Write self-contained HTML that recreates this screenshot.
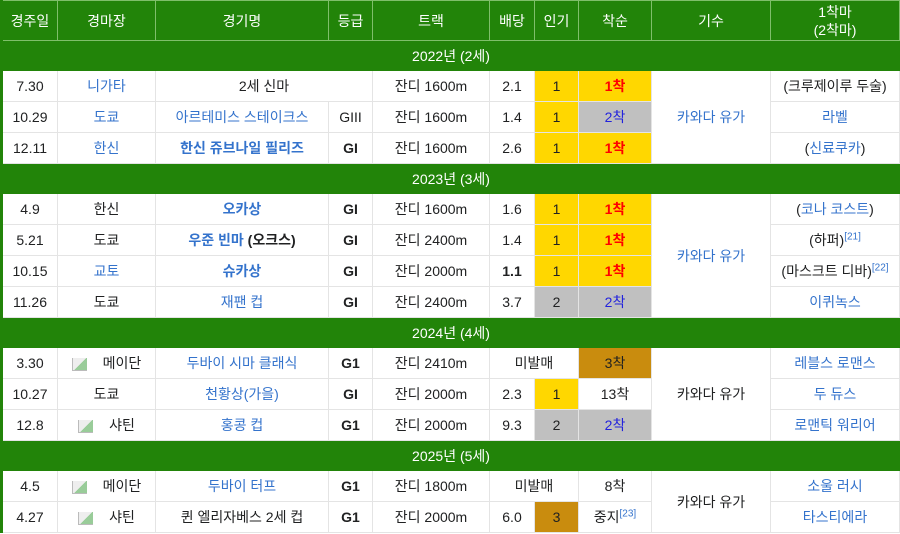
<!DOCTYPE html>
<html><head><meta charset="utf-8"><style>
body{margin:0;background:#fff;font-family:"Liberation Sans","Noto Sans CJK KR",sans-serif;font-size:14px;color:#202122}
table{border-collapse:collapse;table-layout:fixed;width:900px;border-left:3px solid #228409}
td,th{border:1px solid #e4e4e4;text-align:center;padding:0;height:30px;white-space:nowrap;overflow:hidden}
th{background:#228409;color:#fff;font-weight:normal;border-color:#7fbf6a;height:39px;line-height:18px}
tr.s td{background:#228409;color:#fff;border-color:#228409;height:29px}
a{color:#3473cc;text-decoration:none}
.b{font-weight:bold}
.g{background:#ffd700}.sv{background:#c0c0c0}.br{background:#c98c0e}
.r{color:#f00;font-weight:bold}.bl{color:#2222dd}
sup{font-size:10px;color:#3473cc}
.im{display:inline-block;width:14px;height:12px;border:1px solid #bbb;border-right:none;border-top:none;vertical-align:middle;margin-right:16px;background:linear-gradient(135deg,#eee 50%,#9c9 50%)}
</style></head><body>
<table>
<colgroup><col style="width:56px"><col style="width:98px"><col style="width:173px"><col style="width:44px"><col style="width:117px"><col style="width:45px"><col style="width:44px"><col style="width:73px"><col style="width:119px"><col></colgroup>
<tr><th>경주일</th><th>경마장</th><th>경기명</th><th>등급</th><th>트랙</th><th>배당</th><th>인기</th><th>착순</th><th>기수</th><th>1착마<br>(2착마)</th></tr>
<tr class="s"><td colspan="10">2022년 (2세)</td></tr>
<tr><td>7.30</td><td><a>니가타</a></td><td colspan="2">2세 신마</td><td>잔디 1600m</td><td>2.1</td><td class="g">1</td><td class="g r">1착</td><td rowspan="3"><a>카와다 유가</a></td><td>(크루제이루 두술)</td></tr>
<tr><td>10.29</td><td><a>도쿄</a></td><td><a>아르테미스 스테이크스</a></td><td>GIII</td><td>잔디 1600m</td><td>1.4</td><td class="g">1</td><td class="sv bl">2착</td><td><a>라벨</a></td></tr>
<tr><td>12.11</td><td><a>한신</a></td><td><a class="b">한신 쥬브나일 필리즈</a></td><td class="b">GI</td><td>잔디 1600m</td><td>2.6</td><td class="g">1</td><td class="g r">1착</td><td>(<a>신료쿠카</a>)</td></tr>
<tr class="s"><td colspan="10">2023년 (3세)</td></tr>
<tr><td>4.9</td><td>한신</td><td><a class="b">오카상</a></td><td class="b">GI</td><td>잔디 1600m</td><td>1.6</td><td class="g">1</td><td class="g r">1착</td><td rowspan="4"><a>카와다 유가</a></td><td>(<a>코나 코스트</a>)</td></tr>
<tr><td>5.21</td><td>도쿄</td><td><a class="b">우준 빈마</a> <span class="b">(오크스)</span></td><td class="b">GI</td><td>잔디 2400m</td><td>1.4</td><td class="g">1</td><td class="g r">1착</td><td>(하퍼)<sup>[21]</sup></td></tr>
<tr><td>10.15</td><td><a>교토</a></td><td><a class="b">슈카상</a></td><td class="b">GI</td><td>잔디 2000m</td><td class="b">1.1</td><td class="g">1</td><td class="g r">1착</td><td>(마스크트 디바)<sup>[22]</sup></td></tr>
<tr><td>11.26</td><td>도쿄</td><td><a>재팬 컵</a></td><td class="b">GI</td><td>잔디 2400m</td><td>3.7</td><td class="sv">2</td><td class="sv bl">2착</td><td><a>이퀴녹스</a></td></tr>
<tr class="s"><td colspan="10">2024년 (4세)</td></tr>
<tr><td>3.30</td><td><span class="im"></span>메이단</td><td><a>두바이 시마 클래식</a></td><td class="b">G1</td><td>잔디 2410m</td><td colspan="2">미발매</td><td class="br">3착</td><td rowspan="3">카와다 유가</td><td><a>레블스 로맨스</a></td></tr>
<tr><td>10.27</td><td>도쿄</td><td><a>천황상(가을)</a></td><td class="b">GI</td><td>잔디 2000m</td><td>2.3</td><td class="g">1</td><td>13착</td><td><a>두 듀스</a></td></tr>
<tr><td>12.8</td><td><span class="im"></span>샤틴</td><td><a>홍콩 컵</a></td><td class="b">G1</td><td>잔디 2000m</td><td>9.3</td><td class="sv">2</td><td class="sv bl">2착</td><td><a>로맨틱 워리어</a></td></tr>
<tr class="s"><td colspan="10">2025년 (5세)</td></tr>
<tr><td>4.5</td><td><span class="im"></span>메이단</td><td><a>두바이 터프</a></td><td class="b">G1</td><td>잔디 1800m</td><td colspan="2">미발매</td><td>8착</td><td rowspan="2">카와다 유가</td><td><a>소울 러시</a></td></tr>
<tr><td>4.27</td><td><span class="im"></span>샤틴</td><td>퀸 엘리자베스 2세 컵</td><td class="b">G1</td><td>잔디 2000m</td><td>6.0</td><td class="br">3</td><td>중지<sup>[23]</sup></td><td><a>타스티에라</a></td></tr>
</table>
</body></html>
